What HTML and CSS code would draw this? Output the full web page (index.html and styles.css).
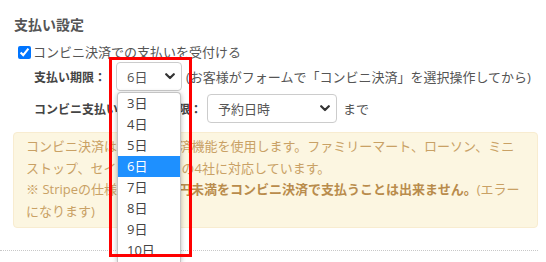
FILE: index.html
```html
<!DOCTYPE html>
<html lang="ja">
<head>
<meta charset="utf-8">
<link rel="stylesheet" href="styles.css">
</head>
<body>
<div class="section">
  <h3 class="title">支払い設定</h3>
  <label class="check-row"><input type="checkbox" checked class="check"><span>コンビニ決済での支払いを受付ける</span></label>
  <div class="field-row">
    <span class="label label-short">支払い期限：</span>
    <div class="select select-short"><span>6日</span><svg class="chev" width="10" height="7" viewBox="0 0 10 7"><path d="M1.2 1.2 L5 5 L8.8 1.2" fill="none" stroke="#333" stroke-width="2.2" stroke-linecap="round" stroke-linejoin="round"/></svg></div>
    <span class="note">(お客様がフォームで「コンビニ決済」を選択操作してから)</span>
  </div>
  <div class="field-row row-gap">
    <span class="label label-long">コンビニ支払い（入金）期限：</span>
    <div class="select select-long"><span>予約日時</span><svg class="chev" width="10" height="7" viewBox="0 0 10 7"><path d="M1.2 1.2 L5 5 L8.8 1.2" fill="none" stroke="#333" stroke-width="2.2" stroke-linecap="round" stroke-linejoin="round"/></svg></div>
    <span class="note note-after">まで</span>
  </div>
  <div class="alert">
    コンビニ決済はStripeの決済機能を使用します。ファミリーマート、ローソン、ミニストップ、セイコーマートの4社に対応しています。<br>
    ※ Stripeの仕様により<strong>120円未満をコンビニ決済で支払うことは出来ません。</strong>(エラー<br>になります)
  </div>
</div>
<div class="divider"></div>

<ul class="dropdown">
  <li class="opt">3日</li>
  <li class="opt">4日</li>
  <li class="opt">5日</li>
  <li class="opt opt-active">6日</li>
  <li class="opt">7日</li>
  <li class="opt">8日</li>
  <li class="opt">9日</li>
  <li class="opt">10日</li>
  <li class="opt">11日</li>
</ul>
<div class="highlight-box"></div>
</body>
</html>
```

FILE: styles.css
```css
html, body {
  margin: 0;
  padding: 0;
  overflow: hidden;
  background: #fff;
}
body {
  width: 546px;
  height: 262px;
  position: relative;
  font-family: "Open Sans", "Noto Sans CJK JP", sans-serif;
  font-size: 13px;
  color: #555;
}
.section {
  padding: 14px 8px 0 13px;
}
.title {
  margin: 0 0 0 1px;
  font-size: 14px;
  font-weight: 700;
  line-height: 22px;
  height: 22px;
  color: #555;
}
.check-row {
  display: flex;
  align-items: center;
  height: 20px;
  margin-top: 6px;
  padding-left: 5px;
  line-height: 20px;
}
.check {
  width: 13px;
  height: 13px;
  margin: 0 2px 0 0;
}
.field-row {
  display: flex;
  align-items: center;
  height: 29px;
  padding-left: 21px;
}
.row-gap {
  margin-top: 3px;
}
.label {
  font-size: 12px;
  font-weight: 700;
  color: #444;
  white-space: nowrap;
}
.label-short {
  margin-right: 10px;
}
.label-long {
  margin-right: 5px;
}
.select {
  box-sizing: border-box;
  height: 29px;
  border: 1px solid #ccc;
  border-radius: 4px;
  display: flex;
  align-items: center;
  justify-content: space-between;
  padding: 0 6px 0 10px;
  color: #555;
  background: #fff;
}
.select-short {
  width: 66px;
}
.select-long {
  width: 130px;
}
.chev {
  display: block;
}
.note {
  margin-left: 4px;
  white-space: nowrap;
}
.note-after {
  margin-left: 6px;
}
.alert {
  margin-top: 9px;
  box-sizing: border-box;
  height: 96px;
  padding: 3px 12px 4px 12px;
  background: #fcf6e1;
  border: 1px solid #f8ecd0;
  border-radius: 4px;
  color: #c9a165;
  line-height: 21.6px;
}
.alert strong {
  font-weight: 700;
  color: #b98c4c;
}
.divider {
  margin-top: 22px;
  margin-right: 8px;
  border-top: 1px dotted #c8c8c8;
}
.dropdown {
  position: absolute;
  left: 117px;
  top: 92px;
  width: 64px;
  height: 170px;
  box-sizing: border-box;
  margin: 0;
  padding: 0;
  list-style: none;
  background: #fff;
  border: 1px solid #c4c4c4;
  border-bottom: 0;
  border-radius: 4px 4px 0 0;
  box-shadow: 0 1px 5px rgba(0, 0, 0, 0.28);
  overflow: hidden;
}
.opt {
  height: 21px;
  line-height: 21px;
  padding-left: 9px;
  color: #444;
}
.opt-active {
  background: #1e90ff;
  color: #fff;
}
.highlight-box {
  position: absolute;
  left: 109px;
  top: 57px;
  width: 83px;
  height: 200px;
  box-sizing: border-box;
  border: 3px solid #ff0000;
}
```
